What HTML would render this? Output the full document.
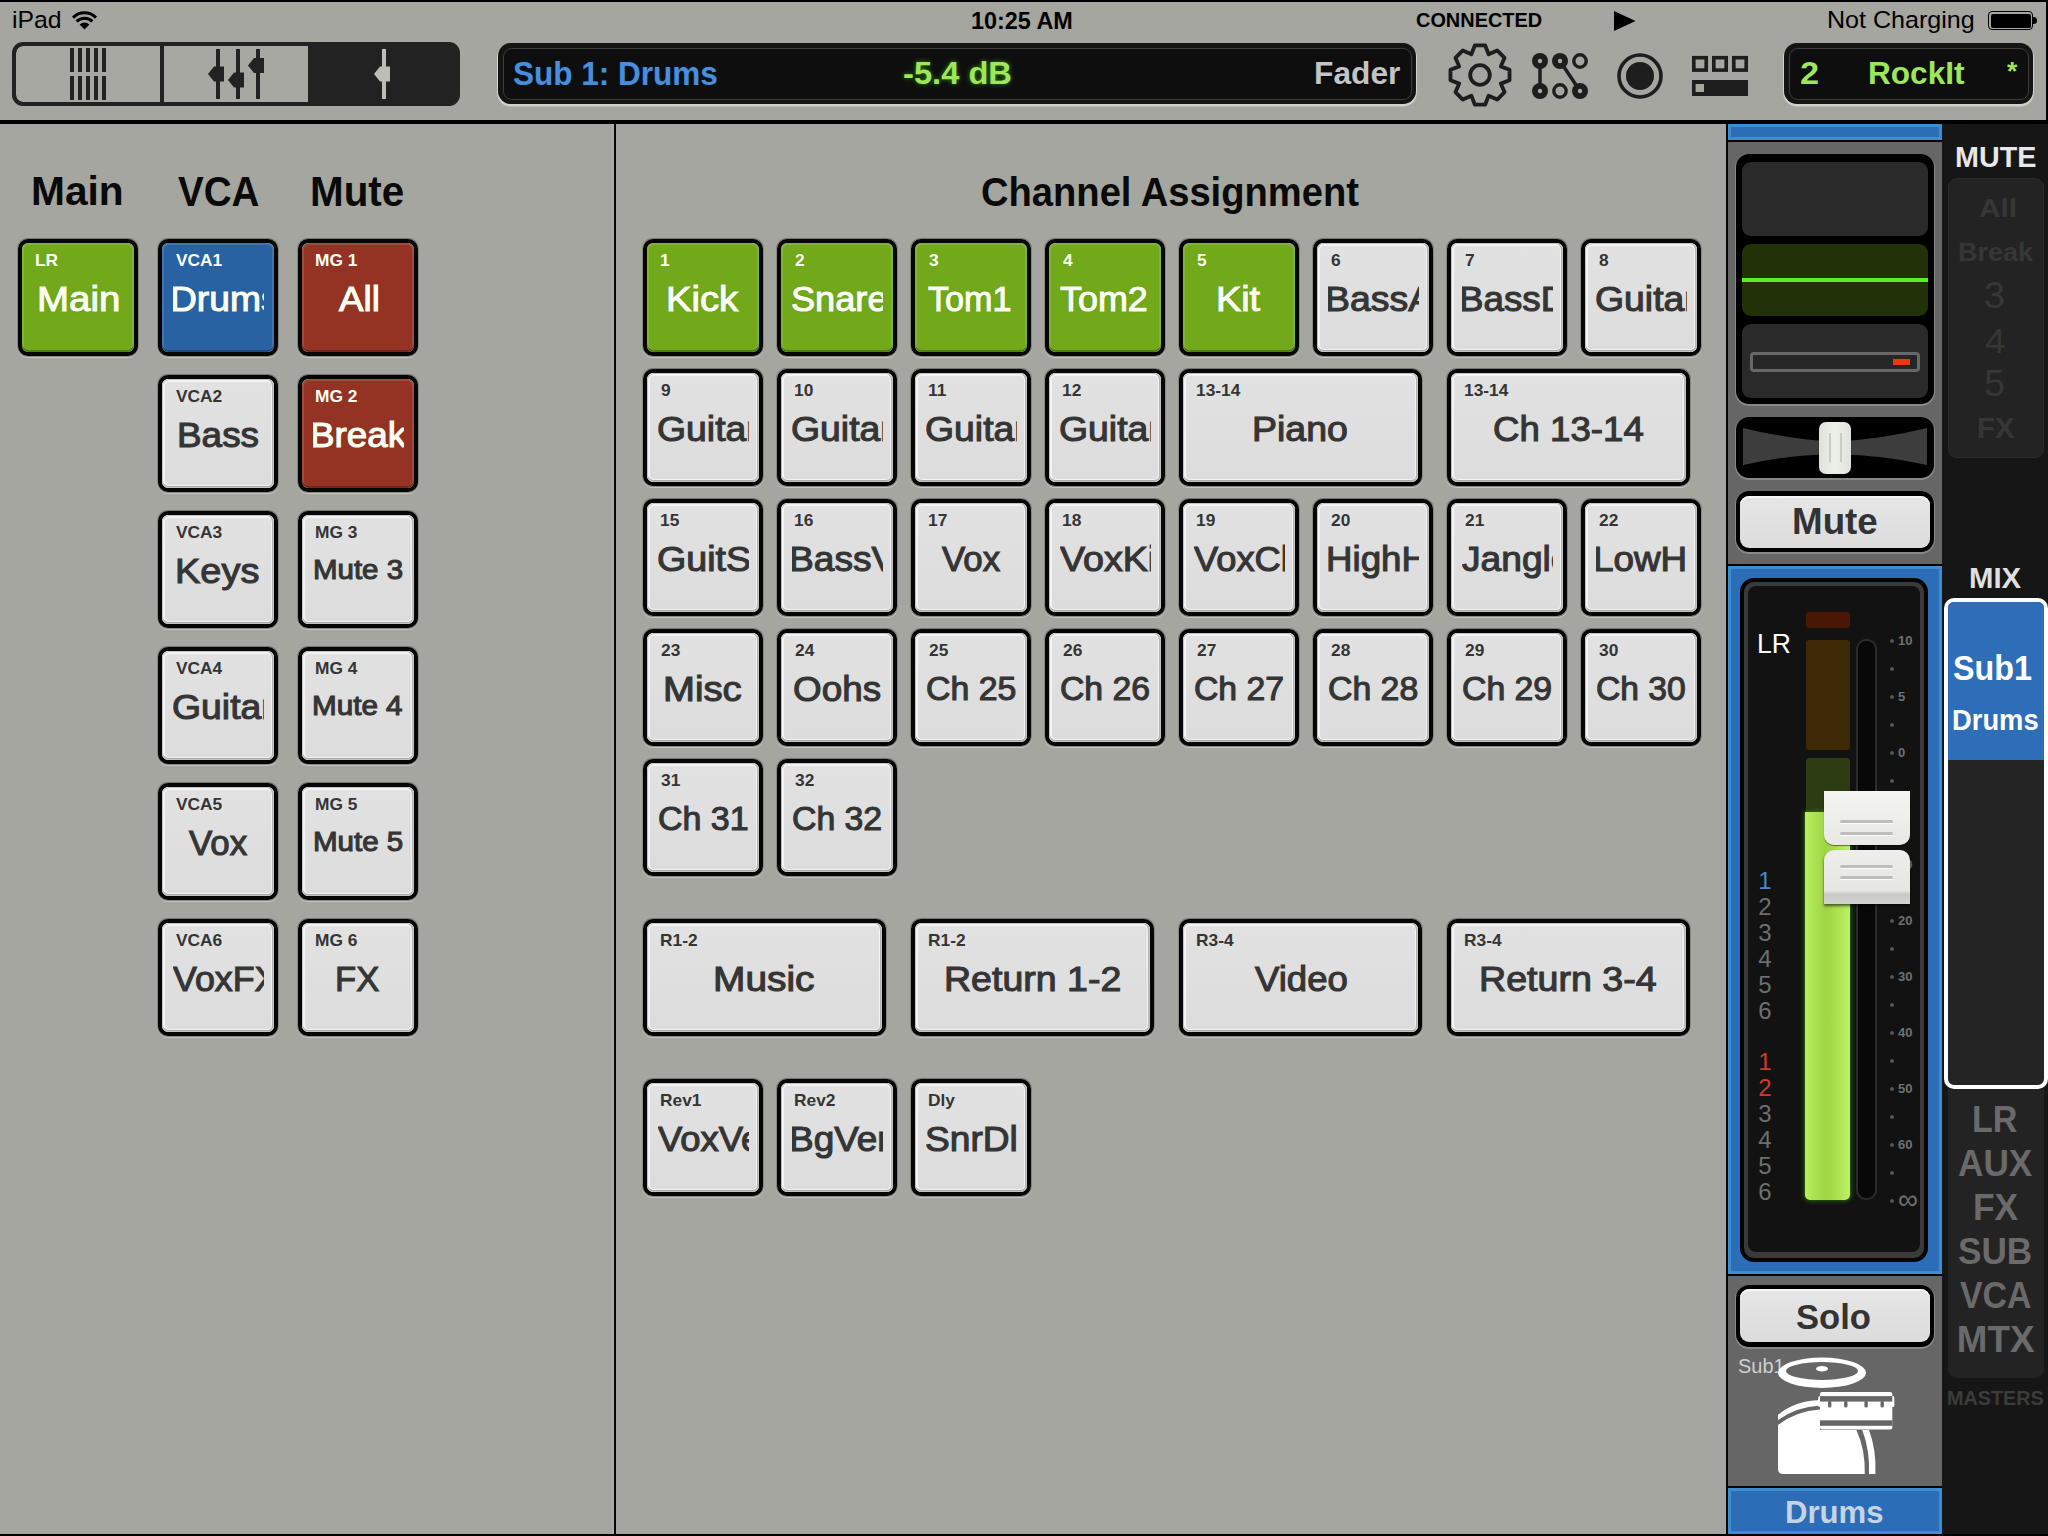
<!DOCTYPE html><html><head><meta charset="utf-8"><style>
*{margin:0;padding:0;box-sizing:border-box}
html,body{width:2048px;height:1536px;overflow:hidden}
body{position:relative;background:#a4a69f;font-family:"Liberation Sans",sans-serif}
.a{position:absolute}
.t{position:absolute;white-space:nowrap;line-height:1}
.b{position:absolute;border:4px solid #060606;border-radius:10px;box-shadow:0 0 0 1px rgba(60,60,55,.45),0 1px 0 1px rgba(225,225,215,.55)}
.b .f{position:absolute;left:0;top:0;right:0;bottom:0;border-radius:7px;overflow:hidden}
.L .f{background:linear-gradient(#e2e2e2,#dcdcdc);box-shadow:inset 0 0 0 1px #c4c4c4,inset 0 -2px 0 #a8a8a8,inset -2px 0 0 #b4b4b4,inset 0 0 0 3px #f3f3f3}
.G .f{background:#71a91a;box-shadow:inset 0 -2px 0 #4f7d12,inset 0 0 0 2px rgba(255,255,255,.12)}
.U .f{background:#2862a3;box-shadow:inset 0 -2px 0 #1f4a7e,inset 0 0 0 2px rgba(255,255,255,.12)}
.R .f{background:#943324;box-shadow:inset 0 -2px 0 #73261b,inset 0 0 0 2px rgba(255,255,255,.12)}
.b .c{position:absolute;left:11px;top:0;height:109px;overflow:hidden}
.L{color:#353535}
.G,.U,.R{color:#fbfff2}
.G .m,.U .m,.R .m{text-shadow:0 0 1.5px rgba(0,40,0,.6)}
</style></head><body><div class="a" style="left:0;top:0;width:2048px;height:2px;background:#000"></div>
<div class="a" style="left:2046px;top:0;width:2px;height:124px;background:#000"></div>
<div class="a" style="left:0;top:120px;width:2048px;height:4px;background:#000"></div>
<div class="a" style="left:0;top:1534px;width:2048px;height:2px;background:#000"></div>
<div class="t" style="left:11.84px;top:9.19px;font-size:23.05px;font-weight:normal;color:#000;transform:scaleX(1.0742);transform-origin:0 0;">iPad</div>
<svg class="a" style="left:71px;top:10px" width="27" height="21" viewBox="0 0 27 21"><path d="M13.5 19.5 L8.6 14.6 A7 7 0 0 1 18.4 14.6 Z" fill="#000"/><path d="M5.6 11.4 A11.2 11.2 0 0 1 21.4 11.4" stroke="#000" stroke-width="3" fill="none"/><path d="M2 7.6 A16.3 16.3 0 0 1 25 7.6" stroke="#000" stroke-width="3" fill="none"/></svg>
<div class="t" style="left:971.23px;top:8.53px;font-size:24.06px;font-weight:bold;color:#000;transform:scaleX(0.9725);transform-origin:0 0;">10:25 AM</div>
<div class="t" style="left:1416.48px;top:9.18px;font-size:21.05px;font-weight:bold;color:#000;transform:scaleX(0.9461);transform-origin:0 0;">CONNECTED</div>
<svg class="a" style="left:1613px;top:10px" width="24" height="22"><path d="M1 1 L22.6 11 L1 21 Z" fill="#000"/></svg>
<div class="t" style="left:1827.44px;top:8.84px;font-size:23.46px;font-weight:normal;color:#000;transform:scaleX(1.0690);transform-origin:0 0;">Not Charging</div>
<div class="a" style="left:1988px;top:11px;width:45px;height:19px;border:1.5px solid #000;border-radius:4px;padding:1.5px"><div style="width:100%;height:100%;background:#000;border-radius:2px"></div></div>
<div class="a" style="left:2033px;top:16.5px;width:4px;height:7.5px;background:#000;border-radius:0 4px 4px 0"></div>
<div class="a" style="left:12px;top:42px;width:448px;height:64px;border:4px solid #222;border-radius:11px;overflow:hidden;background:#222"><div class="a" style="left:0;top:0;width:144px;height:56px;background:#a6a8a1;border-radius:7px 0 0 7px"></div><div class="a" style="left:148px;top:0;width:144px;height:56px;background:#a6a8a1"></div></div>
<svg class="a" style="left:60px;top:46px" width="56" height="58"><rect x="10" y="2" width="4" height="24" fill="#222"/><rect x="10" y="30" width="4" height="24" fill="#222"/><rect x="18" y="2" width="4" height="24" fill="#222"/><rect x="18" y="30" width="4" height="24" fill="#222"/><rect x="26" y="2" width="4" height="24" fill="#222"/><rect x="26" y="30" width="4" height="24" fill="#222"/><rect x="34" y="2" width="4" height="24" fill="#222"/><rect x="34" y="30" width="4" height="24" fill="#222"/><rect x="42" y="2" width="4" height="24" fill="#222"/><rect x="42" y="30" width="4" height="24" fill="#222"/></svg>
<svg class="a" style="left:200px;top:46px" width="80" height="58"><rect x="16" y="3" width="4" height="50" fill="#222"/><path d="M8 28 L14 20.5 L24 20.5 L24 35.5 L14 35.5 Z" fill="#222"/><rect x="36" y="3" width="4" height="50" fill="#222"/><path d="M28 34 L34 26.5 L44 26.5 L44 41.5 L34 41.5 Z" fill="#222"/><rect x="56" y="3" width="4" height="50" fill="#222"/><path d="M48 19.5 L54 12 L64 12 L64 27 L54 27 Z" fill="#222"/></svg>
<svg class="a" style="left:360px;top:46px" width="40" height="58"><rect x="22" y="3" width="4" height="50" fill="#bdbdb8"/><path d="M14 28 L20 20.5 L30 20.5 L30 35.5 L20 35.5 Z" fill="#bdbdb8"/></svg>
<div class="a" style="left:498px;top:43px;width:918px;height:61px;background:#141414;border-radius:13px;box-shadow:0 1.5px 0 1px #cfd1ca"><div class="a" style="left:4.5px;top:5px;right:4.5px;bottom:4.5px;border:1.5px solid #3c3c3c;border-radius:9px;background:#0e0e0e"></div></div>
<div class="t" style="left:513.19px;top:57.36px;font-size:33.12px;font-weight:bold;color:#4a8ed8;transform:scaleX(0.9516);transform-origin:0 0;text-shadow:0 0 2px #002a60">Sub 1: Drums</div>
<div class="t" style="left:903.12px;top:58.20px;font-size:31.19px;font-weight:bold;color:#9ee65a;transform:scaleX(1.0479);transform-origin:0 0;text-shadow:0 0 5px rgba(70,180,20,.75)">-5.4 dB</div>
<div class="t" style="left:1313.78px;top:58.40px;font-size:31.19px;font-weight:bold;color:#c4c4c4;transform:scaleX(1.0173);transform-origin:0 0;text-shadow:0 1px 1px #000">Fader</div>
<svg class="a" style="left:1448px;top:43px" width="64" height="64"><path d="M23.39 11.21 L26.79 2.46 L37.21 2.46 L40.61 11.21 L40.61 11.21 L49.21 7.43 L56.57 14.79 L52.79 23.39 L52.79 23.39 L61.54 26.79 L61.54 37.21 L52.79 40.61 L52.79 40.61 L56.57 49.21 L49.21 56.57 L40.61 52.79 L40.61 52.79 L37.21 61.54 L26.79 61.54 L23.39 52.79 L23.39 52.79 L14.79 56.57 L7.43 49.21 L11.21 40.61 L11.21 40.61 L2.46 37.21 L2.46 26.79 L11.21 23.39 L11.21 23.39 L7.43 14.79 L14.79 7.43 L23.39 11.21 Z" fill="none" stroke="#1e1e1e" stroke-width="3.8" stroke-linejoin="round"/><circle cx="32" cy="32" r="9.8" fill="none" stroke="#1e1e1e" stroke-width="3.8"/></svg>
<svg class="a" style="left:1526px;top:47px" width="68" height="58"><line x1="14" y1="14" x2="14" y2="44" stroke="#1e1e1e" stroke-width="3.5"/><line x1="34" y1="14" x2="54" y2="44" stroke="#1e1e1e" stroke-width="3.5"/><circle cx="14" cy="14" r="8" fill="#1e1e1e"/><circle cx="14" cy="14" r="2.2" fill="#a6a8a1"/><circle cx="34" cy="14" r="8" fill="#1e1e1e"/><circle cx="34" cy="14" r="2.2" fill="#a6a8a1"/><circle cx="54" cy="14" r="6.2" fill="none" stroke="#1e1e1e" stroke-width="3.4"/><circle cx="14" cy="44" r="8" fill="#1e1e1e"/><circle cx="14" cy="44" r="2.2" fill="#a6a8a1"/><circle cx="34" cy="44" r="6.2" fill="none" stroke="#1e1e1e" stroke-width="3.4"/><circle cx="54" cy="44" r="8" fill="#1e1e1e"/><circle cx="54" cy="44" r="2.2" fill="#a6a8a1"/></svg>
<svg class="a" style="left:1614px;top:50px" width="52" height="52"><circle cx="26" cy="26" r="21" fill="none" stroke="#1e1e1e" stroke-width="3.6"/><circle cx="26" cy="26" r="14" fill="#1e1e1e"/></svg>
<svg class="a" style="left:1690px;top:54px" width="60" height="44"><rect x="3.8" y="3.7" width="12.4" height="12.4" fill="none" stroke="#1e1e1e" stroke-width="3.6"/><rect x="23.8" y="3.7" width="12.4" height="12.4" fill="none" stroke="#1e1e1e" stroke-width="3.6"/><rect x="43.8" y="3.7" width="12.4" height="12.4" fill="none" stroke="#1e1e1e" stroke-width="3.6"/><rect x="2" y="26" width="56" height="16" fill="#1e1e1e"/><rect x="5.6" y="30" width="8.4" height="8" fill="#a6a8a1"/></svg>
<div class="a" style="left:1784px;top:43px;width:249px;height:61px;background:#141414;border-radius:13px;box-shadow:0 1.5px 0 1px #cfd1ca"><div class="a" style="left:4.5px;top:5px;right:4.5px;bottom:4.5px;border:1.5px solid #3c3c3c;border-radius:9px;background:#0e0e0e"></div></div>
<div class="t" style="left:1799.81px;top:58.09px;font-size:31.79px;font-weight:bold;color:#9ee65a;transform:scaleX(1.0779);transform-origin:0 0;">2</div>
<div class="t" style="left:1867.99px;top:58.25px;font-size:31.60px;font-weight:bold;color:#9ee65a;">RockIt</div>
<div class="t" style="left:2006.52px;top:58.76px;font-size:25.50px;font-weight:bold;color:#9ee65a;transform:scaleX(1.0383);transform-origin:0 0;">*</div>
<div class="a" style="left:612px;top:124px;width:2px;height:1410px;background:rgba(255,255,255,.10)"></div>
<div class="a" style="left:614px;top:124px;width:2px;height:1410px;background:#050505"></div>
<div class="a" style="left:1726px;top:124px;width:2px;height:1410px;background:#050505"></div>
<div class="t" style="left:30.98px;top:172.30px;font-size:40.16px;font-weight:bold;color:#0a0a0a;transform:scaleX(1.0139);transform-origin:0 0;">Main</div>
<div class="t" style="left:177.54px;top:171.02px;font-size:41.68px;font-weight:bold;color:#0a0a0a;transform:scaleX(0.9249);transform-origin:0 0;">VCA</div>
<div class="t" style="left:310.30px;top:170.50px;font-size:42.30px;font-weight:bold;color:#0a0a0a;transform:scaleX(0.9555);transform-origin:0 0;">Mute</div>
<div class="b G" style="left:18px;top:239px;width:120px;height:117px"><div class="f"><div class="t n" style="left:13.24px;top:9.41px;font-size:17.00px;font-weight:bold;transform:scaleX(1.020);transform-origin:0 0">LR</div><div class="c" style="width:91px"><div class="t m" style="left:3.50px;top:37.62px;font-size:35.17px;font-weight:normal;-webkit-text-stroke:1.1px currentColor;transform:scaleX(1.0931);transform-origin:0 0">Main</div></div></div></div>
<div class="b U" style="left:158px;top:239px;width:120px;height:117px"><div class="f"><div class="t n" style="left:14.28px;top:9.41px;font-size:17.00px;font-weight:bold;transform:scaleX(1.020);transform-origin:0 0">VCA1</div><div class="c" style="width:91px"><div class="t m" style="left:-2.55px;top:37.62px;font-size:35.17px;font-weight:normal;-webkit-text-stroke:1.1px currentColor;transform:scaleX(1.0585);transform-origin:0 0">Drums</div></div></div></div>
<div class="b R" style="left:298px;top:239px;width:120px;height:117px"><div class="f"><div class="t n" style="left:13.24px;top:9.41px;font-size:17.00px;font-weight:bold;transform:scaleX(1.020);transform-origin:0 0">MG 1</div><div class="c" style="width:91px"><div class="t m" style="left:26.29px;top:37.62px;font-size:35.17px;font-weight:normal;-webkit-text-stroke:1.1px currentColor;transform:scaleX(1.0441);transform-origin:0 0">All</div></div></div></div>
<div class="b L" style="left:158px;top:375px;width:120px;height:117px"><div class="f"><div class="t n" style="left:14.28px;top:9.41px;font-size:17.00px;font-weight:bold;transform:scaleX(1.020);transform-origin:0 0">VCA2</div><div class="c" style="width:91px"><div class="t m" style="left:3.61px;top:37.62px;font-size:35.17px;font-weight:normal;-webkit-text-stroke:1.1px currentColor;transform:scaleX(1.0497);transform-origin:0 0">Bass</div></div></div></div>
<div class="b R" style="left:298px;top:375px;width:120px;height:117px"><div class="f"><div class="t n" style="left:13.24px;top:9.41px;font-size:17.00px;font-weight:bold;transform:scaleX(1.020);transform-origin:0 0">MG 2</div><div class="c" style="width:91px"><div class="t m" style="left:-2.52px;top:37.62px;font-size:35.17px;font-weight:normal;-webkit-text-stroke:1.1px currentColor;transform:scaleX(1.0467);transform-origin:0 0">Break</div></div></div></div>
<div class="b L" style="left:158px;top:511px;width:120px;height:117px"><div class="f"><div class="t n" style="left:14.28px;top:9.41px;font-size:17.00px;font-weight:bold;transform:scaleX(1.020);transform-origin:0 0">VCA3</div><div class="c" style="width:91px"><div class="t m" style="left:2.43px;top:37.62px;font-size:35.17px;font-weight:normal;-webkit-text-stroke:1.1px currentColor;transform:scaleX(1.0792);transform-origin:0 0">Keys</div></div></div></div>
<div class="b L" style="left:298px;top:511px;width:120px;height:117px"><div class="f"><div class="t n" style="left:13.24px;top:9.41px;font-size:17.00px;font-weight:bold;transform:scaleX(1.020);transform-origin:0 0">MG 3</div><div class="c" style="width:91px"><div class="t m" style="left:-0.12px;top:41.17px;font-size:27.91px;font-weight:normal;-webkit-text-stroke:1.1px currentColor;transform:scaleX(1.0560);transform-origin:0 0">Mute 3</div></div></div></div>
<div class="b L" style="left:158px;top:647px;width:120px;height:117px"><div class="f"><div class="t n" style="left:14.28px;top:9.41px;font-size:17.00px;font-weight:bold;transform:scaleX(1.020);transform-origin:0 0">VCA4</div><div class="c" style="width:91px"><div class="t m" style="left:-1.38px;top:37.62px;font-size:35.17px;font-weight:normal;-webkit-text-stroke:1.1px currentColor;transform:scaleX(1.0626);transform-origin:0 0">Guitar</div></div></div></div>
<div class="b L" style="left:298px;top:647px;width:120px;height:117px"><div class="f"><div class="t n" style="left:13.24px;top:9.41px;font-size:17.00px;font-weight:bold;transform:scaleX(1.020);transform-origin:0 0">MG 4</div><div class="c" style="width:91px"><div class="t m" style="left:-0.57px;top:41.17px;font-size:27.91px;font-weight:normal;-webkit-text-stroke:1.1px currentColor;transform:scaleX(1.0614);transform-origin:0 0">Mute 4</div></div></div></div>
<div class="b L" style="left:158px;top:783px;width:120px;height:117px"><div class="f"><div class="t n" style="left:14.28px;top:9.41px;font-size:17.00px;font-weight:bold;transform:scaleX(1.020);transform-origin:0 0">VCA5</div><div class="c" style="width:91px"><div class="t m" style="left:15.55px;top:37.62px;font-size:35.17px;font-weight:normal;-webkit-text-stroke:1.1px currentColor;transform:scaleX(0.9920);transform-origin:0 0">Vox</div></div></div></div>
<div class="b L" style="left:298px;top:783px;width:120px;height:117px"><div class="f"><div class="t n" style="left:13.24px;top:9.41px;font-size:17.00px;font-weight:bold;transform:scaleX(1.020);transform-origin:0 0">MG 5</div><div class="c" style="width:91px"><div class="t m" style="left:-0.24px;top:41.17px;font-size:27.91px;font-weight:normal;-webkit-text-stroke:1.1px currentColor;transform:scaleX(1.0582);transform-origin:0 0">Mute 5</div></div></div></div>
<div class="b L" style="left:158px;top:919px;width:120px;height:117px"><div class="f"><div class="t n" style="left:14.28px;top:9.41px;font-size:17.00px;font-weight:bold;transform:scaleX(1.020);transform-origin:0 0">VCA6</div><div class="c" style="width:91px"><div class="t m" style="left:0.34px;top:37.62px;font-size:35.17px;font-weight:normal;-webkit-text-stroke:1.1px currentColor;transform:scaleX(1.0175);transform-origin:0 0">VoxFX</div></div></div></div>
<div class="b L" style="left:298px;top:919px;width:120px;height:117px"><div class="f"><div class="t n" style="left:13.24px;top:9.41px;font-size:17.00px;font-weight:bold;transform:scaleX(1.020);transform-origin:0 0">MG 6</div><div class="c" style="width:91px"><div class="t m" style="left:22.32px;top:37.62px;font-size:35.17px;font-weight:normal;-webkit-text-stroke:1.1px currentColor;transform:scaleX(0.9843);transform-origin:0 0">FX</div></div></div></div>
<div class="t" style="left:981.44px;top:172.12px;font-size:40.02px;font-weight:bold;color:#0a0a0a;transform:scaleX(0.9532);transform-origin:0 0;">Channel Assignment</div>
<div class="b G" style="left:643px;top:239px;width:120px;height:117px"><div class="f"><div class="t n" style="left:13.31px;top:9.41px;font-size:17.00px;font-weight:bold;transform:scaleX(1.020);transform-origin:0 0">1</div><div class="c" style="width:91px"><div class="t m" style="left:7.89px;top:37.62px;font-size:35.17px;font-weight:normal;-webkit-text-stroke:1.1px currentColor;transform:scaleX(1.0840);transform-origin:0 0">Kick</div></div></div></div>
<div class="b G" style="left:777px;top:239px;width:120px;height:117px"><div class="f"><div class="t n" style="left:13.80px;top:9.41px;font-size:17.00px;font-weight:bold;transform:scaleX(1.020);transform-origin:0 0">2</div><div class="c" style="width:91px"><div class="t m" style="left:-1.14px;top:37.62px;font-size:35.17px;font-weight:normal;-webkit-text-stroke:1.1px currentColor;transform:scaleX(1.0286);transform-origin:0 0">Snare</div></div></div></div>
<div class="b G" style="left:911px;top:239px;width:120px;height:117px"><div class="f"><div class="t n" style="left:14.00px;top:9.41px;font-size:17.00px;font-weight:bold;transform:scaleX(1.020);transform-origin:0 0">3</div><div class="c" style="width:91px"><div class="t m" style="left:2.28px;top:37.62px;font-size:35.17px;font-weight:normal;-webkit-text-stroke:1.1px currentColor;transform:scaleX(0.9714);transform-origin:0 0">Tom1</div></div></div></div>
<div class="b G" style="left:1045px;top:239px;width:120px;height:117px"><div class="f"><div class="t n" style="left:14.14px;top:9.41px;font-size:17.00px;font-weight:bold;transform:scaleX(1.020);transform-origin:0 0">4</div><div class="c" style="width:91px"><div class="t m" style="left:0.13px;top:37.62px;font-size:35.17px;font-weight:normal;-webkit-text-stroke:1.1px currentColor;transform:scaleX(1.0203);transform-origin:0 0">Tom2</div></div></div></div>
<div class="b G" style="left:1179px;top:239px;width:120px;height:117px"><div class="f"><div class="t n" style="left:13.87px;top:9.41px;font-size:17.00px;font-weight:bold;transform:scaleX(1.020);transform-origin:0 0">5</div><div class="c" style="width:91px"><div class="t m" style="left:22.09px;top:37.62px;font-size:35.17px;font-weight:normal;-webkit-text-stroke:1.1px currentColor;transform:scaleX(1.0719);transform-origin:0 0">Kit</div></div></div></div>
<div class="b L" style="left:1313px;top:239px;width:120px;height:117px"><div class="f"><div class="t n" style="left:13.76px;top:9.41px;font-size:17.00px;font-weight:bold;transform:scaleX(1.020);transform-origin:0 0">6</div><div class="c" style="width:91px"><div class="t m" style="left:-2.57px;top:37.62px;font-size:35.17px;font-weight:normal;-webkit-text-stroke:1.1px currentColor;transform:scaleX(1.0636);transform-origin:0 0">BassAmp</div></div></div></div>
<div class="b L" style="left:1447px;top:239px;width:120px;height:117px"><div class="f"><div class="t n" style="left:13.65px;top:9.41px;font-size:17.00px;font-weight:bold;transform:scaleX(1.020);transform-origin:0 0">7</div><div class="c" style="width:91px"><div class="t m" style="left:-2.52px;top:37.62px;font-size:35.17px;font-weight:normal;-webkit-text-stroke:1.1px currentColor;transform:scaleX(1.0451);transform-origin:0 0">BassDI</div></div></div></div>
<div class="b L" style="left:1581px;top:239px;width:120px;height:117px"><div class="f"><div class="t n" style="left:13.85px;top:9.41px;font-size:17.00px;font-weight:bold;transform:scaleX(1.020);transform-origin:0 0">8</div><div class="c" style="width:91px"><div class="t m" style="left:-1.38px;top:37.62px;font-size:35.17px;font-weight:normal;-webkit-text-stroke:1.1px currentColor;transform:scaleX(1.0626);transform-origin:0 0">Guitar</div></div></div></div>
<div class="b L" style="left:643px;top:369px;width:120px;height:117px"><div class="f"><div class="t n" style="left:13.80px;top:9.41px;font-size:17.00px;font-weight:bold;transform:scaleX(1.020);transform-origin:0 0">9</div><div class="c" style="width:91px"><div class="t m" style="left:-1.38px;top:37.62px;font-size:35.17px;font-weight:normal;-webkit-text-stroke:1.1px currentColor;transform:scaleX(1.0626);transform-origin:0 0">Guitar</div></div></div></div>
<div class="b L" style="left:777px;top:369px;width:120px;height:117px"><div class="f"><div class="t n" style="left:13.31px;top:9.41px;font-size:17.00px;font-weight:bold;transform:scaleX(1.020);transform-origin:0 0">10</div><div class="c" style="width:91px"><div class="t m" style="left:-1.38px;top:37.62px;font-size:35.17px;font-weight:normal;-webkit-text-stroke:1.1px currentColor;transform:scaleX(1.0626);transform-origin:0 0">Guitar</div></div></div></div>
<div class="b L" style="left:911px;top:369px;width:120px;height:117px"><div class="f"><div class="t n" style="left:13.31px;top:9.41px;font-size:17.00px;font-weight:bold;transform:scaleX(1.020);transform-origin:0 0">11</div><div class="c" style="width:91px"><div class="t m" style="left:-1.38px;top:37.62px;font-size:35.17px;font-weight:normal;-webkit-text-stroke:1.1px currentColor;transform:scaleX(1.0626);transform-origin:0 0">Guitar</div></div></div></div>
<div class="b L" style="left:1045px;top:369px;width:120px;height:117px"><div class="f"><div class="t n" style="left:13.31px;top:9.41px;font-size:17.00px;font-weight:bold;transform:scaleX(1.020);transform-origin:0 0">12</div><div class="c" style="width:91px"><div class="t m" style="left:-1.38px;top:37.62px;font-size:35.17px;font-weight:normal;-webkit-text-stroke:1.1px currentColor;transform:scaleX(1.0626);transform-origin:0 0">Guitar</div></div></div></div>
<div class="b L" style="left:1179px;top:369px;width:243px;height:117px"><div class="f"><div class="t n" style="left:13.31px;top:9.41px;font-size:17.00px;font-weight:bold;transform:scaleX(1.020);transform-origin:0 0">13-14</div><div class="c" style="width:214px"><div class="t m" style="left:58.29px;top:37.62px;font-size:35.17px;font-weight:normal;-webkit-text-stroke:1.1px currentColor;transform:scaleX(1.0663);transform-origin:0 0">Piano</div></div></div></div>
<div class="b L" style="left:1447px;top:369px;width:243px;height:117px"><div class="f"><div class="t n" style="left:13.31px;top:9.41px;font-size:17.00px;font-weight:bold;transform:scaleX(1.020);transform-origin:0 0">13-14</div><div class="c" style="width:214px"><div class="t m" style="left:31.19px;top:37.62px;font-size:35.17px;font-weight:normal;-webkit-text-stroke:1.1px currentColor;transform:scaleX(1.0424);transform-origin:0 0">Ch 13-14</div></div></div></div>
<div class="b L" style="left:643px;top:499px;width:120px;height:117px"><div class="f"><div class="t n" style="left:13.31px;top:9.41px;font-size:17.00px;font-weight:bold;transform:scaleX(1.020);transform-origin:0 0">15</div><div class="c" style="width:91px"><div class="t m" style="left:-1.39px;top:37.62px;font-size:35.17px;font-weight:normal;-webkit-text-stroke:1.1px currentColor;transform:scaleX(1.0701);transform-origin:0 0">GuitSolo</div></div></div></div>
<div class="b L" style="left:777px;top:499px;width:120px;height:117px"><div class="f"><div class="t n" style="left:13.31px;top:9.41px;font-size:17.00px;font-weight:bold;transform:scaleX(1.020);transform-origin:0 0">16</div><div class="c" style="width:91px"><div class="t m" style="left:-2.55px;top:37.62px;font-size:35.17px;font-weight:normal;-webkit-text-stroke:1.1px currentColor;transform:scaleX(1.0560);transform-origin:0 0">BassVox</div></div></div></div>
<div class="b L" style="left:911px;top:499px;width:120px;height:117px"><div class="f"><div class="t n" style="left:13.31px;top:9.41px;font-size:17.00px;font-weight:bold;transform:scaleX(1.020);transform-origin:0 0">17</div><div class="c" style="width:91px"><div class="t m" style="left:15.55px;top:37.62px;font-size:35.17px;font-weight:normal;-webkit-text-stroke:1.1px currentColor;transform:scaleX(0.9920);transform-origin:0 0">Vox</div></div></div></div>
<div class="b L" style="left:1045px;top:499px;width:120px;height:117px"><div class="f"><div class="t n" style="left:13.31px;top:9.41px;font-size:17.00px;font-weight:bold;transform:scaleX(1.020);transform-origin:0 0">18</div><div class="c" style="width:91px"><div class="t m" style="left:0.33px;top:37.62px;font-size:35.17px;font-weight:normal;-webkit-text-stroke:1.1px currentColor;transform:scaleX(1.0699);transform-origin:0 0">VoxKick</div></div></div></div>
<div class="b L" style="left:1179px;top:499px;width:120px;height:117px"><div class="f"><div class="t n" style="left:13.31px;top:9.41px;font-size:17.00px;font-weight:bold;transform:scaleX(1.020);transform-origin:0 0">19</div><div class="c" style="width:91px"><div class="t m" style="left:0.34px;top:37.62px;font-size:35.17px;font-weight:normal;-webkit-text-stroke:1.1px currentColor;transform:scaleX(1.0320);transform-origin:0 0">VoxClean</div></div></div></div>
<div class="b L" style="left:1313px;top:499px;width:120px;height:117px"><div class="f"><div class="t n" style="left:13.80px;top:9.41px;font-size:17.00px;font-weight:bold;transform:scaleX(1.020);transform-origin:0 0">20</div><div class="c" style="width:91px"><div class="t m" style="left:-2.51px;top:37.62px;font-size:35.17px;font-weight:normal;-webkit-text-stroke:1.1px currentColor;transform:scaleX(1.0437);transform-origin:0 0">HighHat</div></div></div></div>
<div class="b L" style="left:1447px;top:499px;width:120px;height:117px"><div class="f"><div class="t n" style="left:13.80px;top:9.41px;font-size:17.00px;font-weight:bold;transform:scaleX(1.020);transform-origin:0 0">21</div><div class="c" style="width:91px"><div class="t m" style="left:-0.08px;top:37.62px;font-size:35.17px;font-weight:normal;-webkit-text-stroke:1.1px currentColor;transform:scaleX(1.0565);transform-origin:0 0">Jangle</div></div></div></div>
<div class="b L" style="left:1581px;top:499px;width:120px;height:117px"><div class="f"><div class="t n" style="left:13.80px;top:9.41px;font-size:17.00px;font-weight:bold;transform:scaleX(1.020);transform-origin:0 0">22</div><div class="c" style="width:91px"><div class="t m" style="left:-2.52px;top:37.62px;font-size:35.17px;font-weight:normal;-webkit-text-stroke:1.1px currentColor;transform:scaleX(1.0475);transform-origin:0 0">LowHat</div></div></div></div>
<div class="b L" style="left:643px;top:629px;width:120px;height:117px"><div class="f"><div class="t n" style="left:13.80px;top:9.41px;font-size:17.00px;font-weight:bold;transform:scaleX(1.020);transform-origin:0 0">23</div><div class="c" style="width:91px"><div class="t m" style="left:5.09px;top:37.62px;font-size:35.17px;font-weight:normal;-webkit-text-stroke:1.1px currentColor;transform:scaleX(1.0885);transform-origin:0 0">Misc</div></div></div></div>
<div class="b L" style="left:777px;top:629px;width:120px;height:117px"><div class="f"><div class="t n" style="left:13.80px;top:9.41px;font-size:17.00px;font-weight:bold;transform:scaleX(1.020);transform-origin:0 0">24</div><div class="c" style="width:91px"><div class="t m" style="left:1.23px;top:37.62px;font-size:35.17px;font-weight:normal;-webkit-text-stroke:1.1px currentColor;transform:scaleX(1.0482);transform-origin:0 0">Oohs</div></div></div></div>
<div class="b L" style="left:911px;top:629px;width:120px;height:117px"><div class="f"><div class="t n" style="left:13.80px;top:9.41px;font-size:17.00px;font-weight:bold;transform:scaleX(1.020);transform-origin:0 0">25</div><div class="c" style="width:91px"><div class="t m" style="left:0.20px;top:39.34px;font-size:33.15px;font-weight:normal;-webkit-text-stroke:1.1px currentColor;transform:scaleX(1.0209);transform-origin:0 0">Ch 25</div></div></div></div>
<div class="b L" style="left:1045px;top:629px;width:120px;height:117px"><div class="f"><div class="t n" style="left:13.80px;top:9.41px;font-size:17.00px;font-weight:bold;transform:scaleX(1.020);transform-origin:0 0">26</div><div class="c" style="width:91px"><div class="t m" style="left:0.34px;top:39.34px;font-size:33.15px;font-weight:normal;-webkit-text-stroke:1.1px currentColor;transform:scaleX(1.0184);transform-origin:0 0">Ch 26</div></div></div></div>
<div class="b L" style="left:1179px;top:629px;width:120px;height:117px"><div class="f"><div class="t n" style="left:13.80px;top:9.41px;font-size:17.00px;font-weight:bold;transform:scaleX(1.020);transform-origin:0 0">27</div><div class="c" style="width:91px"><div class="t m" style="left:0.47px;top:39.34px;font-size:33.15px;font-weight:normal;-webkit-text-stroke:1.1px currentColor;transform:scaleX(1.0179);transform-origin:0 0">Ch 27</div></div></div></div>
<div class="b L" style="left:1313px;top:629px;width:120px;height:117px"><div class="f"><div class="t n" style="left:13.80px;top:9.41px;font-size:17.00px;font-weight:bold;transform:scaleX(1.020);transform-origin:0 0">28</div><div class="c" style="width:91px"><div class="t m" style="left:0.24px;top:39.34px;font-size:33.15px;font-weight:normal;-webkit-text-stroke:1.1px currentColor;transform:scaleX(1.0203);transform-origin:0 0">Ch 28</div></div></div></div>
<div class="b L" style="left:1447px;top:629px;width:120px;height:117px"><div class="f"><div class="t n" style="left:13.80px;top:9.41px;font-size:17.00px;font-weight:bold;transform:scaleX(1.020);transform-origin:0 0">29</div><div class="c" style="width:91px"><div class="t m" style="left:0.35px;top:39.34px;font-size:33.15px;font-weight:normal;-webkit-text-stroke:1.1px currentColor;transform:scaleX(1.0194);transform-origin:0 0">Ch 29</div></div></div></div>
<div class="b L" style="left:1581px;top:629px;width:120px;height:117px"><div class="f"><div class="t n" style="left:14.00px;top:9.41px;font-size:17.00px;font-weight:bold;transform:scaleX(1.020);transform-origin:0 0">30</div><div class="c" style="width:91px"><div class="t m" style="left:0.42px;top:39.34px;font-size:33.15px;font-weight:normal;-webkit-text-stroke:1.1px currentColor;transform:scaleX(1.0146);transform-origin:0 0">Ch 30</div></div></div></div>
<div class="b L" style="left:643px;top:759px;width:120px;height:117px"><div class="f"><div class="t n" style="left:14.00px;top:9.41px;font-size:17.00px;font-weight:bold;transform:scaleX(1.020);transform-origin:0 0">31</div><div class="c" style="width:91px"><div class="t m" style="left:0.19px;top:39.34px;font-size:33.15px;font-weight:normal;-webkit-text-stroke:1.1px currentColor;transform:scaleX(1.0236);transform-origin:0 0">Ch 31</div></div></div></div>
<div class="b L" style="left:777px;top:759px;width:120px;height:117px"><div class="f"><div class="t n" style="left:14.00px;top:9.41px;font-size:17.00px;font-weight:bold;transform:scaleX(1.020);transform-origin:0 0">32</div><div class="c" style="width:91px"><div class="t m" style="left:0.40px;top:39.34px;font-size:33.15px;font-weight:normal;-webkit-text-stroke:1.1px currentColor;transform:scaleX(1.0194);transform-origin:0 0">Ch 32</div></div></div></div>
<div class="b L" style="left:643px;top:919px;width:243px;height:117px"><div class="f"><div class="t n" style="left:13.24px;top:9.41px;font-size:17.00px;font-weight:bold;transform:scaleX(1.020);transform-origin:0 0">R1-2</div><div class="c" style="width:214px"><div class="t m" style="left:55.13px;top:37.62px;font-size:35.17px;font-weight:normal;-webkit-text-stroke:1.1px currentColor;transform:scaleX(1.1059);transform-origin:0 0">Music</div></div></div></div>
<div class="b L" style="left:911px;top:919px;width:243px;height:117px"><div class="f"><div class="t n" style="left:13.24px;top:9.41px;font-size:17.00px;font-weight:bold;transform:scaleX(1.020);transform-origin:0 0">R1-2</div><div class="c" style="width:214px"><div class="t m" style="left:17.73px;top:37.62px;font-size:35.17px;font-weight:normal;-webkit-text-stroke:1.1px currentColor;transform:scaleX(1.0671);transform-origin:0 0">Return 1-2</div></div></div></div>
<div class="b L" style="left:1179px;top:919px;width:243px;height:117px"><div class="f"><div class="t n" style="left:13.24px;top:9.41px;font-size:17.00px;font-weight:bold;transform:scaleX(1.020);transform-origin:0 0">R3-4</div><div class="c" style="width:214px"><div class="t m" style="left:60.88px;top:37.62px;font-size:35.17px;font-weight:normal;-webkit-text-stroke:1.1px currentColor;transform:scaleX(1.0406);transform-origin:0 0">Video</div></div></div></div>
<div class="b L" style="left:1447px;top:919px;width:243px;height:117px"><div class="f"><div class="t n" style="left:13.24px;top:9.41px;font-size:17.00px;font-weight:bold;transform:scaleX(1.020);transform-origin:0 0">R3-4</div><div class="c" style="width:214px"><div class="t m" style="left:17.10px;top:37.62px;font-size:35.17px;font-weight:normal;-webkit-text-stroke:1.1px currentColor;transform:scaleX(1.0699);transform-origin:0 0">Return 3-4</div></div></div></div>
<div class="b L" style="left:643px;top:1079px;width:120px;height:117px"><div class="f"><div class="t n" style="left:13.24px;top:9.41px;font-size:17.00px;font-weight:bold;transform:scaleX(1.020);transform-origin:0 0">Rev1</div><div class="c" style="width:91px"><div class="t m" style="left:0.34px;top:37.62px;font-size:35.17px;font-weight:normal;-webkit-text-stroke:1.1px currentColor;transform:scaleX(1.0371);transform-origin:0 0">VoxVerb</div></div></div></div>
<div class="b L" style="left:777px;top:1079px;width:120px;height:117px"><div class="f"><div class="t n" style="left:13.24px;top:9.41px;font-size:17.00px;font-weight:bold;transform:scaleX(1.020);transform-origin:0 0">Rev2</div><div class="c" style="width:91px"><div class="t m" style="left:-2.53px;top:37.62px;font-size:35.17px;font-weight:normal;-webkit-text-stroke:1.1px currentColor;transform:scaleX(1.0511);transform-origin:0 0">BgVerb</div></div></div></div>
<div class="b L" style="left:911px;top:1079px;width:120px;height:117px"><div class="f"><div class="t n" style="left:13.24px;top:9.41px;font-size:17.00px;font-weight:bold;transform:scaleX(1.020);transform-origin:0 0">Dly</div><div class="c" style="width:91px"><div class="t m" style="left:-1.19px;top:37.62px;font-size:35.17px;font-weight:normal;-webkit-text-stroke:1.1px currentColor;transform:scaleX(1.0563);transform-origin:0 0">SnrDly</div></div></div></div>
<div class="a" style="left:1728px;top:124px;width:214px;height:1410px;background:#050505"></div>
<div class="a" style="left:1728px;top:124px;width:214px;height:16px;background:#2c6db8;box-shadow:inset 0 0 0 3px #3d8ed0"></div>
<div class="a" style="left:1728px;top:142px;width:214px;height:422px;background:#666"></div>
<div class="a" style="left:1728px;top:566px;width:214px;height:708px;background:#2c6db8;box-shadow:inset 0 0 0 3px #3d8ed0"></div>
<div class="a" style="left:1728px;top:1276px;width:214px;height:210px;background:#666"></div>
<div class="a" style="left:1728px;top:1488px;width:214px;height:46px;background:#2c6db8;box-shadow:inset 0 0 0 3px #3d8ed0"></div>
<div class="a" style="left:1736px;top:154px;width:198px;height:250px;background:#000;border-radius:13px;box-shadow:0 1px 0 1px #888"></div>
<div class="a" style="left:1742px;top:162px;width:186px;height:74px;background:#2a2a2a;border-radius:9px"></div>
<div class="a" style="left:1742px;top:244px;width:186px;height:72px;background:#223107;border-radius:9px"></div>
<div class="a" style="left:1742px;top:278px;width:186px;height:4px;background:#5cf020"></div>
<div class="a" style="left:1742px;top:324px;width:186px;height:74px;background:#2a2a2a;border-radius:9px"></div>
<div class="a" style="left:1750px;top:352px;width:170px;height:20px;background:#262626;border:3px solid #686868;border-radius:4px"></div>
<div class="a" style="left:1893px;top:359px;width:17px;height:6px;background:#e83a10"></div>
<div class="a" style="left:1736px;top:417px;width:198px;height:61px;background:#000;border-radius:13px;box-shadow:0 1px 0 1px #888"></div>
<svg class="a" style="left:1742px;top:426px" width="186" height="42"><path d="M1 2 Q50 14 93 15.5 Q136 14 185 2 L185 39 Q136 28 93 28.5 Q50 28 1 39 Z" fill="#3d3d3d"/></svg>
<div class="a" style="left:1819px;top:422px;width:32px;height:52px;background:linear-gradient(90deg,#dfe1db,#eef0ea 50%,#dfe1db);border-radius:7px;box-shadow:0 1px 1px rgba(0,0,0,.6)"></div>
<div class="a" style="left:1829px;top:433px;width:2px;height:29px;background:#c9cbc5"></div><div class="a" style="left:1840px;top:433px;width:2px;height:29px;background:#c9cbc5"></div>
<div class="a" style="left:1736px;top:491px;width:198px;height:61px;background:#000;border-radius:13px;box-shadow:0 1px 0 1px #888"></div>
<div class="a" style="left:1740px;top:496px;width:190px;height:52px;background:linear-gradient(#e6e6e6,#dcdcdc);border-radius:9px;box-shadow:inset 0 2px 0 #f6f6f6"></div>
<div class="t" style="left:1791.74px;top:503.55px;font-size:36.92px;font-weight:bold;color:#333;transform:scaleX(0.9963);transform-origin:0 0;">Mute</div>
<div class="a" style="left:1740px;top:578px;width:188px;height:684px;background:#3a3a3a;border:4px solid #050505;border-radius:14px"></div>
<div class="a" style="left:1748px;top:586px;width:172px;height:666px;background:#121212;border-radius:8px"></div>
<div class="a" style="left:1806px;top:612px;width:44px;height:16px;background:#4a1706;border-radius:3px"></div>
<div class="a" style="left:1806px;top:640px;width:44px;height:110px;background:#3f2a08;border-radius:3px"></div>
<div class="a" style="left:1806px;top:758px;width:44px;height:60px;background:#2d3c12;border-radius:3px"></div>
<div class="a" style="left:1805px;top:812px;width:45px;height:388px;background:linear-gradient(90deg,#b8f060,#a0d444 45%,#a6da48 60%,#bcf265);border-radius:0 0 5px 5px;box-shadow:0 0 4px 1px #2e6a0a"></div>
<div class="a" style="left:1856px;top:639px;width:21px;height:561px;background:#080808;border:2px solid #2c2c2c;border-radius:10px"></div>
<div class="t" style="left:1756.82px;top:629.87px;font-size:27.33px;font-weight:normal;color:#fff;transform:scaleX(0.9706);transform-origin:0 0;">LR</div>
<div class="t" style="left:1755px;top:868.7px;width:20px;text-align:center;font-size:24px;color:#4a86d0">1</div>
<div class="t" style="left:1755px;top:894.7px;width:20px;text-align:center;font-size:24px;color:#6e6e6e">2</div>
<div class="t" style="left:1755px;top:920.7px;width:20px;text-align:center;font-size:24px;color:#6e6e6e">3</div>
<div class="t" style="left:1755px;top:946.7px;width:20px;text-align:center;font-size:24px;color:#6e6e6e">4</div>
<div class="t" style="left:1755px;top:972.7px;width:20px;text-align:center;font-size:24px;color:#6e6e6e">5</div>
<div class="t" style="left:1755px;top:998.7px;width:20px;text-align:center;font-size:24px;color:#6e6e6e">6</div>
<div class="t" style="left:1755px;top:1049.7px;width:20px;text-align:center;font-size:24px;color:#d03a2a">1</div>
<div class="t" style="left:1755px;top:1075.7px;width:20px;text-align:center;font-size:24px;color:#d03a2a">2</div>
<div class="t" style="left:1755px;top:1101.7px;width:20px;text-align:center;font-size:24px;color:#6e6e6e">3</div>
<div class="t" style="left:1755px;top:1127.7px;width:20px;text-align:center;font-size:24px;color:#6e6e6e">4</div>
<div class="t" style="left:1755px;top:1153.7px;width:20px;text-align:center;font-size:24px;color:#6e6e6e">5</div>
<div class="t" style="left:1755px;top:1179.7px;width:20px;text-align:center;font-size:24px;color:#6e6e6e">6</div>
<div class="a" style="left:1890px;top:639px;width:4px;height:4px;border-radius:2px;background:#555"></div>
<div class="t" style="left:1898px;top:634px;font-size:13px;font-weight:bold;color:#707070">10</div>
<div class="a" style="left:1890px;top:667px;width:4px;height:4px;border-radius:2px;background:#555"></div>
<div class="a" style="left:1890px;top:695px;width:4px;height:4px;border-radius:2px;background:#555"></div>
<div class="t" style="left:1898px;top:690px;font-size:13px;font-weight:bold;color:#707070">5</div>
<div class="a" style="left:1890px;top:723px;width:4px;height:4px;border-radius:2px;background:#555"></div>
<div class="a" style="left:1890px;top:751px;width:4px;height:4px;border-radius:2px;background:#555"></div>
<div class="t" style="left:1898px;top:746px;font-size:13px;font-weight:bold;color:#707070">0</div>
<div class="a" style="left:1890px;top:779px;width:4px;height:4px;border-radius:2px;background:#555"></div>
<div class="a" style="left:1890px;top:807px;width:4px;height:4px;border-radius:2px;background:#555"></div>
<div class="t" style="left:1898px;top:802px;font-size:13px;font-weight:bold;color:#707070">5</div>
<div class="a" style="left:1890px;top:835px;width:4px;height:4px;border-radius:2px;background:#555"></div>
<div class="a" style="left:1890px;top:863px;width:4px;height:4px;border-radius:2px;background:#555"></div>
<div class="t" style="left:1898px;top:858px;font-size:13px;font-weight:bold;color:#707070">10</div>
<div class="a" style="left:1890px;top:891px;width:4px;height:4px;border-radius:2px;background:#555"></div>
<div class="a" style="left:1890px;top:919px;width:4px;height:4px;border-radius:2px;background:#555"></div>
<div class="t" style="left:1898px;top:914px;font-size:13px;font-weight:bold;color:#707070">20</div>
<div class="a" style="left:1890px;top:947px;width:4px;height:4px;border-radius:2px;background:#555"></div>
<div class="a" style="left:1890px;top:975px;width:4px;height:4px;border-radius:2px;background:#555"></div>
<div class="t" style="left:1898px;top:970px;font-size:13px;font-weight:bold;color:#707070">30</div>
<div class="a" style="left:1890px;top:1003px;width:4px;height:4px;border-radius:2px;background:#555"></div>
<div class="a" style="left:1890px;top:1031px;width:4px;height:4px;border-radius:2px;background:#555"></div>
<div class="t" style="left:1898px;top:1026px;font-size:13px;font-weight:bold;color:#707070">40</div>
<div class="a" style="left:1890px;top:1059px;width:4px;height:4px;border-radius:2px;background:#555"></div>
<div class="a" style="left:1890px;top:1087px;width:4px;height:4px;border-radius:2px;background:#555"></div>
<div class="t" style="left:1898px;top:1082px;font-size:13px;font-weight:bold;color:#707070">50</div>
<div class="a" style="left:1890px;top:1115px;width:4px;height:4px;border-radius:2px;background:#555"></div>
<div class="a" style="left:1890px;top:1143px;width:4px;height:4px;border-radius:2px;background:#555"></div>
<div class="t" style="left:1898px;top:1138px;font-size:13px;font-weight:bold;color:#707070">60</div>
<div class="a" style="left:1890px;top:1171px;width:4px;height:4px;border-radius:2px;background:#555"></div>
<div class="a" style="left:1890px;top:1199px;width:4px;height:4px;border-radius:2px;background:#555"></div>
<div class="t" style="left:1898px;top:1186px;font-size:28px;font-weight:normal;color:#707070">&#8734;</div>
<div class="a" style="left:1824px;top:791px;width:86px;height:54px;background:linear-gradient(#f4f4f0,#e8e9e4);border-radius:0 0 10px 10px;box-shadow:0 1px 1px rgba(0,0,0,.5)"></div>
<div class="a" style="left:1824px;top:850px;width:86px;height:54px;background:linear-gradient(#eeeeea,#e6e7e2 75%,#c9cac5 82%,#d3d4cf);border-radius:10px 10px 0 0;box-shadow:0 2px 3px rgba(0,0,0,.6)"></div>
<div class="a" style="left:1840px;top:820px;width:53px;height:3px;background:#bdbfb9;border-radius:1.5px;box-shadow:0 1px 0 #fafaf6"></div>
<div class="a" style="left:1840px;top:832px;width:53px;height:3px;background:#bdbfb9;border-radius:1.5px;box-shadow:0 1px 0 #fafaf6"></div>
<div class="a" style="left:1840px;top:865px;width:53px;height:3px;background:#bdbfb9;border-radius:1.5px;box-shadow:0 1px 0 #fafaf6"></div>
<div class="a" style="left:1840px;top:876px;width:53px;height:3px;background:#bdbfb9;border-radius:1.5px;box-shadow:0 1px 0 #fafaf6"></div>
<div class="a" style="left:1736px;top:1285px;width:198px;height:62px;background:#000;border-radius:13px;box-shadow:0 1px 0 1px #888"></div>
<div class="a" style="left:1740px;top:1289px;width:190px;height:53px;background:linear-gradient(#e6e6e6,#dcdcdc);border-radius:9px;box-shadow:inset 0 2px 0 #f6f6f6"></div>
<div class="t" style="left:1796.00px;top:1299.58px;font-size:34.64px;font-weight:bold;color:#333;">Solo</div>
<div class="t" style="left:1738px;top:1356px;font-size:20px;color:#cfcfcf">Sub1</div>
<svg class="a" style="left:1770px;top:1350px" width="140" height="130" viewBox="0 0 140 130">
<path fill-rule="evenodd" fill="#fff" d="M8 22.8 A44 15.2 0 1 0 96 22.8 A44 15.2 0 1 0 8 22.8 Z M16 21 A36 9 0 1 0 88 21 A36 9 0 1 0 16 21 Z"/>
<ellipse cx="52" cy="18.8" rx="6" ry="2.8" fill="#fff"/>
<path fill="#fff" d="M8 75 Q26 61 50 59.5 L50 80 L86.4 80 Q95.5 100 94.8 124 L13 124 Q8 124 8 119 Z"/>
<path fill="#fff" d="M8 65 Q24 51 50 50 L50 55.5 Q26 57 8 70 Z"/>
<path fill="#fff" d="M92.3 80 L99 80 Q106.5 100 105.4 124 L99 124 Q100 101 92.3 80 Z"/>
<rect x="50" y="42" width="72.3" height="37.6" rx="2" fill="#fff"/>
<rect x="48.3" y="46" width="76" height="11" rx="1.5" fill="#fff"/>
<rect x="50" y="46.1" width="72.3" height="5.5" fill="#666"/>
<rect x="50" y="70.3" width="72.3" height="5.5" fill="#666"/>
<rect x="58" y="51" width="3.4" height="6.4" rx="1.5" fill="#666"/><rect x="74.1" y="51" width="3.4" height="6.4" rx="1.5" fill="#666"/><rect x="94.4" y="51" width="3.4" height="6.4" rx="1.5" fill="#666"/><rect x="110.5" y="51" width="3.4" height="6.4" rx="1.5" fill="#666"/>
</svg>
<div class="t" style="left:1785.42px;top:1497.00px;font-size:31.54px;font-weight:bold;color:#c6d3e2;transform:scaleX(0.9875);transform-origin:0 0;">Drums</div>
<div class="a" style="left:1942px;top:124px;width:106px;height:1410px;background:#161616"></div>
<div class="t" style="left:1954.88px;top:143.42px;font-size:28.92px;font-weight:bold;color:#e8e8e8;transform:scaleX(0.9927);transform-origin:0 0;">MUTE</div>
<div class="a" style="left:1948px;top:178px;width:96px;height:280px;background:#232323;border-radius:9px;box-shadow:inset 0 0 0 1px #2a2a2a"></div>
<div class="t" style="left:1978.96px;top:195.19px;font-size:26.36px;font-weight:bold;color:#363636;transform:scaleX(1.1265);transform-origin:0 0;">All</div>
<div class="t" style="left:1958.00px;top:239.30px;font-size:26.22px;font-weight:bold;color:#363636;transform:scaleX(1.0287);transform-origin:0 0;">Break</div>
<div class="t" style="left:1984.46px;top:277.48px;font-size:37.24px;font-weight:normal;color:#363636;transform:scaleX(1.0139);transform-origin:0 0;">3</div>
<div class="t" style="left:1984.66px;top:322.52px;font-size:35.18px;font-weight:normal;color:#363636;transform:scaleX(1.0437);transform-origin:0 0;">4</div>
<div class="t" style="left:1984.39px;top:365.55px;font-size:36.92px;font-weight:normal;color:#363636;transform:scaleX(1.0226);transform-origin:0 0;">5</div>
<div class="t" style="left:1976.54px;top:413.10px;font-size:29.65px;font-weight:bold;color:#363636;transform:scaleX(0.9875);transform-origin:0 0;">FX</div>
<div class="t" style="left:1969.44px;top:563.64px;font-size:28.78px;font-weight:bold;color:#e0e0e0;transform:scaleX(1.0186);transform-origin:0 0;">MIX</div>
<div class="a" style="left:1944px;top:598px;width:104px;height:491px;border:4px solid #fff;border-radius:10px;background:#242424;overflow:hidden"><div class="a" style="left:0;top:0;width:100%;height:158px;background:#2e6db8"></div></div>
<div class="t" style="left:1953.37px;top:651.44px;font-size:34.92px;font-weight:bold;color:#fff;transform:scaleX(0.9270);transform-origin:0 0;">Sub1</div>
<div class="t" style="left:1952.17px;top:705.94px;font-size:28.78px;font-weight:bold;color:#fff;transform:scaleX(0.9506);transform-origin:0 0;">Drums</div>
<div class="a" style="left:1948px;top:1089px;width:96px;height:289px;background:#232323;border-radius:0 0 9px 9px"></div>
<div class="t" style="left:1971.92px;top:1101.75px;font-size:36.92px;font-weight:bold;color:#6a6a6a;transform:scaleX(0.9242);transform-origin:0 0;">LR</div>
<div class="t" style="left:1957.72px;top:1145.65px;font-size:36.92px;font-weight:bold;color:#6a6a6a;transform:scaleX(0.9543);transform-origin:0 0;">AUX</div>
<div class="t" style="left:1973.34px;top:1189.03px;font-size:37.65px;font-weight:bold;color:#6a6a6a;transform:scaleX(0.9391);transform-origin:0 0;">FX</div>
<div class="t" style="left:1958.29px;top:1233.93px;font-size:36.23px;font-weight:bold;color:#6a6a6a;transform:scaleX(0.9714);transform-origin:0 0;">SUB</div>
<div class="t" style="left:1960.37px;top:1277.83px;font-size:36.23px;font-weight:bold;color:#6a6a6a;transform:scaleX(0.9349);transform-origin:0 0;">VCA</div>
<div class="t" style="left:1956.84px;top:1321.87px;font-size:36.77px;font-weight:bold;color:#6a6a6a;">MTX</div>
<div class="t" style="left:1947.48px;top:1387.78px;font-size:20.34px;font-weight:bold;color:#3c3c3c;transform:scaleX(0.9725);transform-origin:0 0;">MASTERS</div></body></html>
